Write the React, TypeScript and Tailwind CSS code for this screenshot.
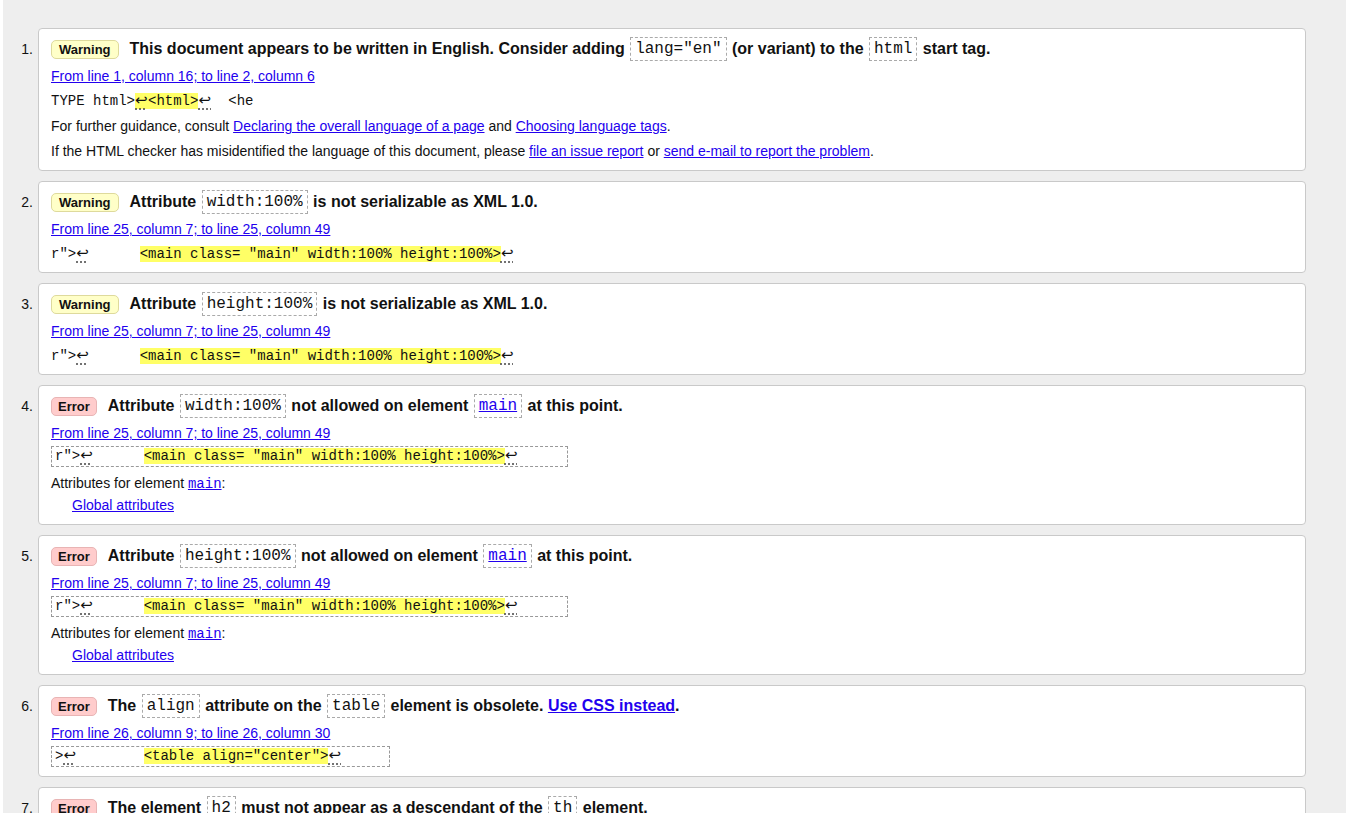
import type { ReactNode } from "react";

const sans = "font-['Liberation_Sans',Arial,sans-serif]";
const mono = "font-['Liberation_Mono','Courier_New',monospace]";

function Badge({ kind }: { kind: "warning" | "error" }) {
  const cls =
    kind === "warning"
      ? "bg-[#ffffc8] border-[#deda9c] px-[7px]"
      : "bg-[#ffcccc] border-[#e8b4b4] px-[6px]";
  return (
    <span
      className={`inline-block shrink-0 rounded-[5px] border text-[13px] font-bold leading-[17px] text-[#111] ${cls}`}
    >
      {kind === "warning" ? "Warning" : "Error"}
    </span>
  );
}

function C({ children, link }: { children: ReactNode; link?: boolean }) {
  return (
    <span
      className={`mx-[1px] inline-block border border-dashed border-[#aaa] px-[4px] py-[2px] align-middle text-[16px] font-normal leading-[18px] ${mono} ${
        link ? "text-[#2200ee] underline" : "text-[#111]"
      }`}
    >
      {children}
    </span>
  );
}

function Ret() {
  return (
    <span className="inline-block w-[13px] font-['DejaVu_Sans',sans-serif] text-[15px] leading-[14px] underline decoration-dotted decoration-[#444] underline-offset-[4px]">
      ↩
    </span>
  );
}

function Hl({ children }: { children: ReactNode }) {
  return <span className="bg-[#ffff66]">{children}</span>;
}

function A({ children }: { children: ReactNode }) {
  return <a className="cursor-pointer text-[#2200ee] underline">{children}</a>;
}

function Loc({ text }: { text: string }) {
  return (
    <div className="mt-[2px] text-[14px] leading-[25px]">
      <A>{text}</A>
    </div>
  );
}

function CodeLine({ children }: { children: ReactNode }) {
  return (
    <div className={`whitespace-pre text-[14px] leading-[25px] text-[#111] ${mono}`}>{children}</div>
  );
}

function CodeBox({ children, w }: { children: ReactNode; w: string }) {
  return (
    <div
      className={`${w} whitespace-pre border border-dashed border-[#999] px-[3px] text-[14px] leading-[19px] text-[#111] ${mono}`}
    >
      {children}
    </div>
  );
}

function Item({
  n,
  kind,
  title,
  children,
  pb = "pb-[6px]",
}: {
  n: number;
  kind: "warning" | "error";
  title: ReactNode;
  children: ReactNode;
  pb?: string;
}) {
  return (
    <li className="flex">
      <div className="w-[35px] shrink-0 pr-[5px] pt-[8px] text-right">
        <div className="flex h-[26px] items-center justify-end text-[14px] text-[#111]">{n}.</div>
      </div>
      <div className={`w-[1268px] rounded-[4px] border border-[#c9c9c9] bg-white px-[12px] pt-[7px] ${pb}`}>
        <div className="flex h-[26px] items-center gap-[11px]">
          <Badge kind={kind} />
          <div className="whitespace-nowrap text-[16px] font-bold text-[#111]">{title}</div>
        </div>
        {children}
      </div>
    </li>
  );
}

const mainLine = (
  <>
    {'r">'}
    <Ret />
    {"      "}
    <Hl>{'<main class= "main" width:100% height:100%>'}</Hl>
    <Ret />
  </>
);

export default function App() {
  return (
    <div className={`min-h-[813px] bg-white pl-[3px] ${sans}`}>
      <div className="min-h-[813px] bg-[#eeeeee] pt-[28px]">
        <ol className="flex flex-col gap-[10px] pb-[20px]">
          <Item
            n={1}
            kind="warning"
            title={
              <>
                This document appears to be written in English. Consider adding <C>lang="en"</C> (or variant)
                to the <C>html</C> start tag.
              </>
            }
          >
            <Loc text="From line 1, column 16; to line 2, column 6" />
            <CodeLine>
              {"TYPE html>"}
              <Hl>
                <Ret />
                {"<html>"}
              </Hl>
              <Ret />
              {"  <he"}
            </CodeLine>
            <div className="text-[14px] leading-[25px] text-[#111]">
              For further guidance, consult <A>Declaring the overall language of a page</A> and{" "}
              <A>Choosing language tags</A>.
            </div>
            <div className="text-[14px] leading-[25px] text-[#111]">
              If the HTML checker has misidentified the language of this document, please{" "}
              <A>file an issue report</A> or <A>send e-mail to report the problem</A>.
            </div>
          </Item>

          <Item
            n={2}
            kind="warning"
            pb="pb-[5px]"
            title={
              <>
                Attribute <C>width:100%</C> is not serializable as XML 1.0.
              </>
            }
          >
            <Loc text="From line 25, column 7; to line 25, column 49" />
            <CodeLine>{mainLine}</CodeLine>
          </Item>

          <Item
            n={3}
            kind="warning"
            pb="pb-[5px]"
            title={
              <>
                Attribute <C>height:100%</C> is not serializable as XML 1.0.
              </>
            }
          >
            <Loc text="From line 25, column 7; to line 25, column 49" />
            <CodeLine>{mainLine}</CodeLine>
          </Item>

          <Item
            n={4}
            kind="error"
            pb="pb-[8px]"
            title={
              <>
                Attribute <C>width:100%</C> not allowed on element <C link>main</C> at this point.
              </>
            }
          >
            <Loc text="From line 25, column 7; to line 25, column 49" />
            <CodeBox w="w-[517px]">{mainLine}</CodeBox>
            <div className="mt-[6px] text-[14px] leading-[21px] text-[#111]">
              Attributes for element{" "}
              <a className={`text-[#2200ee] underline ${mono}`}>main</a>:
            </div>
            <div className="pl-[21px] text-[14px] leading-[21px]">
              <A>Global attributes</A>
            </div>
          </Item>

          <Item
            n={5}
            kind="error"
            pb="pb-[8px]"
            title={
              <>
                Attribute <C>height:100%</C> not allowed on element <C link>main</C> at this point.
              </>
            }
          >
            <Loc text="From line 25, column 7; to line 25, column 49" />
            <CodeBox w="w-[517px]">{mainLine}</CodeBox>
            <div className="mt-[6px] text-[14px] leading-[21px] text-[#111]">
              Attributes for element{" "}
              <a className={`text-[#2200ee] underline ${mono}`}>main</a>:
            </div>
            <div className="pl-[21px] text-[14px] leading-[21px]">
              <A>Global attributes</A>
            </div>
          </Item>

          <Item
            n={6}
            kind="error"
            pb="pb-[9px]"
            title={
              <>
                The <C>align</C> attribute on the <C>table</C> element is obsolete.{" "}
                <a className="text-[#2200ee] underline">Use CSS instead</a>.
              </>
            }
          >
            <Loc text="From line 26, column 9; to line 26, column 30" />
            <CodeBox w="w-[339px]">
              {">"}
              <Ret />
              {"        "}
              <Hl>{'<table align="center">'}</Hl>
              <Ret />
            </CodeBox>
          </Item>

          <Item
            n={7}
            kind="error"
            pb="pb-[9px]"
            title={
              <>
                The element <C>h2</C> must not appear as a descendant of the <C>th</C> element.
              </>
            }
          >
            <Loc text="From line 29, column 13; to line 29, column 16" />
            <CodeBox w="w-[300px]">
              {"<th>"}
              <Ret />
              {"    "}
              <Hl>{"<h2>"}</Hl>
              {"Deutsch"}
            </CodeBox>
          </Item>
        </ol>
      </div>
    </div>
  );
}
